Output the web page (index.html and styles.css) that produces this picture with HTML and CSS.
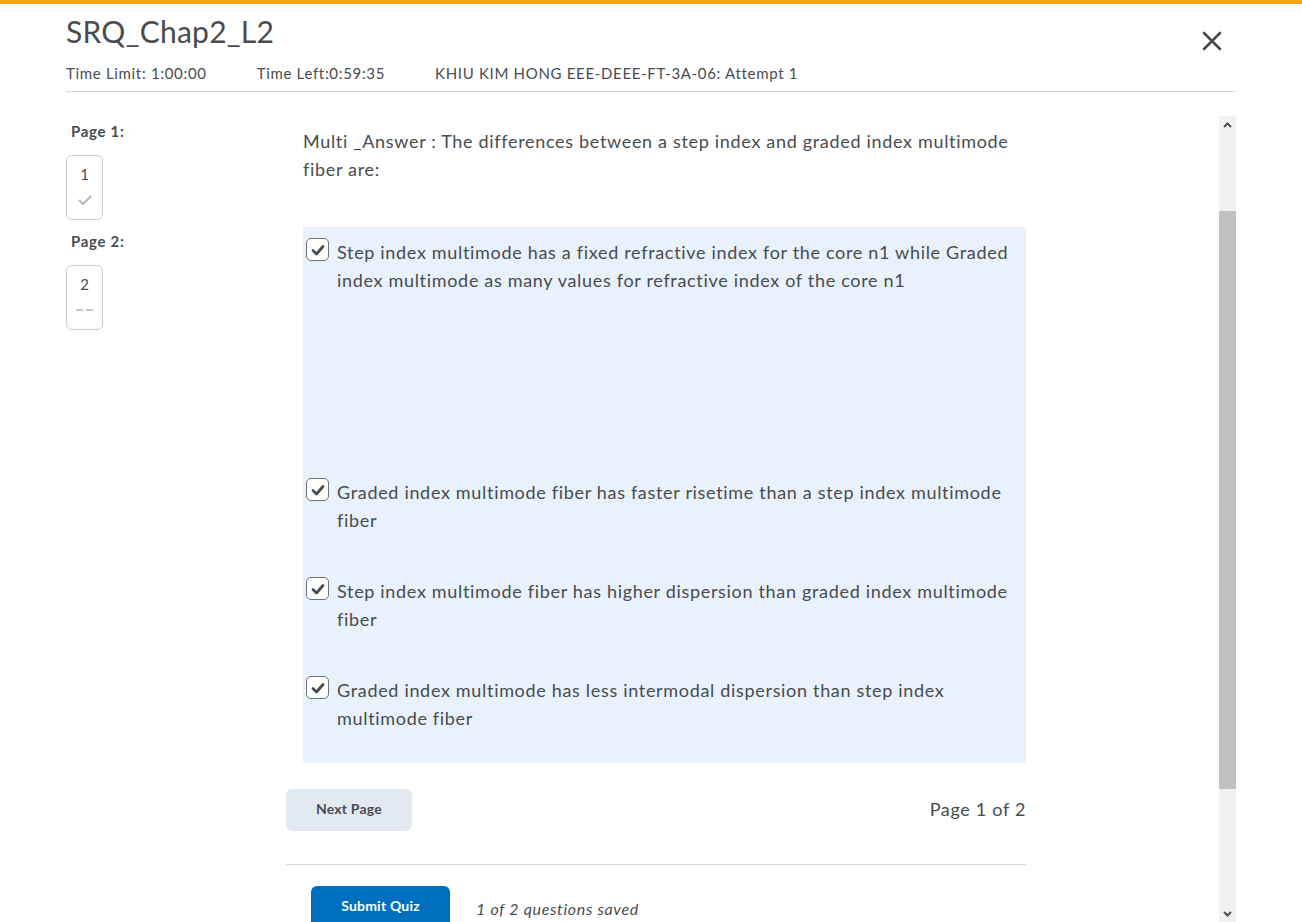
FILE: index.html
```html
<!DOCTYPE html>
<html lang="en">
<head>
<meta charset="utf-8">
<title>SRQ_Chap2_L2</title>
<link rel="stylesheet" href="styles.css">
</head>
<body>
<div class="topbar"></div>
<div class="page">
  <header class="header">
    <div class="header-main">
      <h1 class="title">SRQ_Chap2_L2</h1>
      <div class="meta">
        <span>Time Limit: 1:00:00</span>
        <span>Time Left:0:59:35</span>
        <span>KHIU KIM HONG EEE-DEEE-FT-3A-06: Attempt 1</span>
      </div>
    </div>
    <button class="close" aria-label="Close">
      <svg width="20" height="20" viewBox="0 0 20 20"><path d="M2 2 L18 18 M18 2 L2 18" stroke="#494c4e" stroke-width="2.6" stroke-linecap="round" fill="none"/></svg>
    </button>
  </header>

  <div class="scroller">
    <div class="scroll-content">
      <nav class="pages">
        <div class="page-label">Page 1:</div>
        <div class="page-box">
          <span class="page-num">1</span>
          <svg class="page-check" width="14" height="11" viewBox="0 0 14 11"><path d="M1.5 5.5 L5 9 L12.5 1.5" stroke="#b3b7bb" stroke-width="2" fill="none" stroke-linecap="round" stroke-linejoin="round"/></svg>
        </div>
        <div class="page-label">Page 2:</div>
        <div class="page-box">
          <span class="page-num">2</span>
          <span class="page-dash"><i></i><i></i></span>
        </div>
      </nav>

      <main class="content">
        <p class="question">Multi _Answer : The differences between a step index and graded index multimode fiber are:</p>
        <div class="answers">
          <div class="option">
            <span class="checkbox"><svg width="14" height="12" viewBox="0 0 14 12"><path d="M2 6.5 L5.5 10 L12 2.5" stroke="#494c4e" stroke-width="2.8" fill="none" stroke-linecap="round" stroke-linejoin="round"/></svg></span>
            <div class="opt-text">Step index multimode has a fixed refractive index for the core n1 while Graded index multimode as many values for refractive index of the core n1<div class="opt-blank"></div></div>
          </div>
          <div class="option">
            <span class="checkbox"><svg width="14" height="12" viewBox="0 0 14 12"><path d="M2 6.5 L5.5 10 L12 2.5" stroke="#494c4e" stroke-width="2.8" fill="none" stroke-linecap="round" stroke-linejoin="round"/></svg></span>
            <div class="opt-text">Graded index multimode fiber has faster risetime than a step index multimode fiber</div>
          </div>
          <div class="option">
            <span class="checkbox"><svg width="14" height="12" viewBox="0 0 14 12"><path d="M2 6.5 L5.5 10 L12 2.5" stroke="#494c4e" stroke-width="2.8" fill="none" stroke-linecap="round" stroke-linejoin="round"/></svg></span>
            <div class="opt-text">Step index multimode fiber has higher dispersion than graded index multimode fiber</div>
          </div>
          <div class="option">
            <span class="checkbox"><svg width="14" height="12" viewBox="0 0 14 12"><path d="M2 6.5 L5.5 10 L12 2.5" stroke="#494c4e" stroke-width="2.8" fill="none" stroke-linecap="round" stroke-linejoin="round"/></svg></span>
            <div class="opt-text">Graded index multimode has less intermodal dispersion than step index multimode fiber</div>
          </div>
        </div>

        <div class="pager">
          <button class="btn-secondary">Next Page</button>
          <span class="page-count">Page 1 of 2</span>
        </div>

        <div class="submit-row">
          <button class="btn-primary">Submit Quiz</button>
          <span class="saved">1 of 2 questions saved</span>
        </div>
      </main>
    </div>

    <div class="scrollbar">
      <div class="sb-arrow">
        <svg width="9" height="6" viewBox="0 0 9 6"><path d="M1 5 L4.5 1.5 L8 5" stroke="#505050" stroke-width="2" fill="none"/></svg>
      </div>
      <div class="sb-track"><div class="sb-thumb"></div></div>
      <div class="sb-arrow">
        <svg width="9" height="6" viewBox="0 0 9 6"><path d="M1 1 L4.5 4.5 L8 1" stroke="#505050" stroke-width="2" fill="none"/></svg>
      </div>
    </div>
  </div>
</div>
</body>
</html>
```

FILE: styles.css
```css
* { box-sizing: border-box; }

html, body {
  margin: 0;
  padding: 0;
  background: #ffffff;
  height: 922px;
  overflow: hidden;
}

body {
  font-family: Lato, "Noto Sans", sans-serif;
  color: #494c4e;
  letter-spacing: 0.68px;
}

.topbar {
  height: 4px;
  background: #f7a11a;
}

.page {
  width: 1170px;
  margin-left: 66px;
}

.header {
  display: flex;
  justify-content: space-between;
  align-items: flex-start;
  border-bottom: 1px solid #d3d9e3;
}

.title {
  margin: 9px 0 0 0;
  font-size: 30px;
  line-height: 36px;
  font-weight: 400;
  letter-spacing: 0.25px;
}

.meta {
  display: flex;
  gap: 50px;
  margin-top: 14px;
  padding-bottom: 8px;
  font-size: 15px;
  line-height: 20px;
}

.close {
  margin: 27px 14px 0 0;
  padding: 0;
  border: none;
  background: transparent;
  width: 20px;
  height: 20px;
}

.scroller {
  display: flex;
  margin-top: 24px;
  height: 806px;
  overflow: hidden;
}

.scroll-content {
  flex: 1;
  display: flex;
}

.pages {
  width: 220px;
  padding-top: 6px;
}

.page-label {
  font-size: 15px;
  font-weight: 700;
  line-height: 18px;
  padding-left: 5px;
  margin-bottom: 15px;
}

.page-box {
  width: 37px;
  height: 65px;
  border: 1px solid #c7cbcf;
  border-radius: 6px;
  display: flex;
  flex-direction: column;
  align-items: center;
  padding-top: 9px;
  margin-bottom: 12px;
}

.page-num {
  font-size: 15px;
  line-height: 18px;
  letter-spacing: 0;
}

.page-check {
  margin-top: 12px;
}

.page-dash {
  margin-top: 16px;
  display: flex;
  gap: 3px;
}

.page-dash i {
  display: block;
  width: 7px;
  height: 2px;
  background: #c3c7cb;
}

.content {
  width: 740px;
}

.question {
  margin: 11px 0 0 17px;
  font-size: 18px;
  line-height: 28px;
}

.answers {
  margin: 44px 0 0 17px;
  background: #e8f1fc;
  padding: 11px 0 31px 3px;
  display: flex;
  flex-direction: column;
  gap: 43px;
}

.option {
  display: flex;
  align-items: flex-start;
  gap: 8px;
}

.checkbox {
  flex: none;
  width: 23px;
  height: 23px;
  border: 1.5px solid #6e7376;
  border-radius: 5px;
  background: #ffffff;
  display: flex;
  align-items: center;
  justify-content: center;
}

.opt-text {
  font-size: 18px;
  line-height: 28px;
  flex: 1;
}

.opt-blank {
  height: 141px;
}

.pager {
  display: flex;
  justify-content: space-between;
  align-items: center;
  margin-top: 26px;
  padding-bottom: 33px;
  border-bottom: 1px solid #d3d9e3;
}

.btn-secondary {
  width: 126px;
  height: 42px;
  padding: 0 0 3px 0;
  border: none;
  border-radius: 6px;
  background: #e3e9f1;
  color: #494c4e;
  font-family: Lato, sans-serif;
  font-size: 14px;
  font-weight: 700;
  letter-spacing: 0.2px;
}

.page-count {
  font-size: 18px;
  margin-bottom: 2px;
}

.submit-row {
  display: flex;
  align-items: center;
  gap: 26px;
  margin-top: 21px;
  padding-left: 25px;
}

.btn-primary {
  width: 139px;
  height: 42px;
  padding: 0 0 3px 0;
  border: none;
  border-radius: 6px;
  background: #006fbf;
  color: #ffffff;
  font-family: Lato, sans-serif;
  font-size: 14px;
  font-weight: 700;
  letter-spacing: 0.2px;
}

.saved {
  font-size: 16px;
  font-style: italic;
  margin-top: 3px;
}

.scrollbar {
  width: 17px;
  flex: none;
  background: #f1f1f1;
  display: flex;
  flex-direction: column;
}

.sb-arrow {
  height: 17px;
  display: flex;
  align-items: center;
  justify-content: center;
}

.sb-track {
  flex: 1;
  padding-top: 78px;
}

.sb-thumb {
  height: 578px;
  background: #c1c1c1;
}
```
